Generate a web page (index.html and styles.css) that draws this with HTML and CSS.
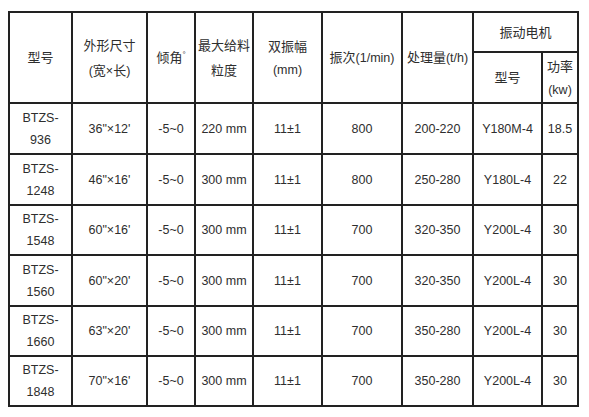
FILE: index.html
```html
<!DOCTYPE html>
<html>
<head>
<meta charset="utf-8">
<link rel="stylesheet" href="styles.css">
</head>
<body>
<table class="spec">
  <colgroup>
    <col class="c1"><col class="c2"><col class="c3"><col class="c4"><col class="c5"><col class="c6"><col class="c7"><col class="c8"><col class="c9">
  </colgroup>
  <thead>
    <tr class="h1">
      <th rowspan="2"><span class="cjk">型号</span></th>
      <th rowspan="2"><span class="cjk">外形尺寸</span><br>(<span class="cjk">宽</span>×<span class="cjk">长</span>)</th>
      <th rowspan="2"><span class="cjk">倾角</span><sup class="deg">°</sup></th>
      <th rowspan="2"><span class="cjk">最大给料</span><br><span class="cjk">粒度</span></th>
      <th rowspan="2"><span class="cjk">双振幅</span><br>(mm)</th>
      <th rowspan="2"><span class="cjk">振次</span>(1/min)</th>
      <th rowspan="2"><span class="cjk">处理量</span>(t/h)</th>
      <th colspan="2"><span class="cjk">振动电机</span></th>
    </tr>
    <tr class="h2">
      <th><span class="cjk">型号</span></th>
      <th><span class="cjk">功率</span><br>(kw)</th>
    </tr>
  </thead>
  <tbody>
    <tr class="r51"><td>BTZS-<br>936</td><td>36"×12'</td><td>-5~0</td><td>220 mm</td><td>11±1</td><td>800</td><td>200-220</td><td>Y180M-4</td><td>18.5</td></tr>
    <tr class="r51"><td>BTZS-<br>1248</td><td>46"×16'</td><td>-5~0</td><td>300 mm</td><td>11±1</td><td>800</td><td>250-280</td><td>Y180L-4</td><td>22</td></tr>
    <tr class="r50"><td>BTZS-<br>1548</td><td>60"×16'</td><td>-5~0</td><td>300 mm</td><td>11±1</td><td>700</td><td>320-350</td><td>Y200L-4</td><td>30</td></tr>
    <tr class="r51"><td>BTZS-<br>1560</td><td>60"×20'</td><td>-5~0</td><td>300 mm</td><td>11±1</td><td>700</td><td>320-350</td><td>Y200L-4</td><td>30</td></tr>
    <tr class="r50"><td>BTZS-<br>1660</td><td>63"×20'</td><td>-5~0</td><td>300 mm</td><td>11±1</td><td>700</td><td>350-280</td><td>Y200L-4</td><td>30</td></tr>
    <tr class="r50"><td>BTZS-<br>1848</td><td>70"×16'</td><td>-5~0</td><td>300 mm</td><td>11±1</td><td>700</td><td>350-280</td><td>Y200L-4</td><td>30</td></tr>
  </tbody>
</table>
</body>
</html>
```
FILE: styles.css
```css
html, body {
  margin: 0;
  padding: 0;
  background: #ffffff;
}
body {
  padding: 11px 0 0 8px;
  font-family: "Liberation Sans", Arial, "Noto Sans CJK SC", sans-serif;
  font-size: 12.5px;
  color: #2e2e2e;
}
.cjk {
  font-family: "Noto Sans CJK SC", sans-serif;
  font-size: 13px;
}
.spec {
  border-collapse: collapse;
  table-layout: fixed;
  width: 571px;
}
.c1 { width: 63px; }
.c2 { width: 75px; }
.c3 { width: 48px; }
.c4 { width: 58px; }
.c5 { width: 69px; }
.c6 { width: 80px; }
.c7 { width: 71px; }
.c8 { width: 69px; }
.c9 { width: 36px; }
.spec th, .spec td {
  border: 2px solid #222222;
  padding: 0;
  text-align: center;
  vertical-align: middle;
  font-weight: normal;
  line-height: 22px;
  white-space: nowrap;
}
.spec th {
  line-height: 23px;
}
.h1 { height: 40px; }
.h2 { height: 51px; }
.r51 { height: 51px; }
.r50 { height: 50px; }
.deg {
  font-size: 8px;
  vertical-align: top;
  position: relative;
  top: -2px;
}
```
